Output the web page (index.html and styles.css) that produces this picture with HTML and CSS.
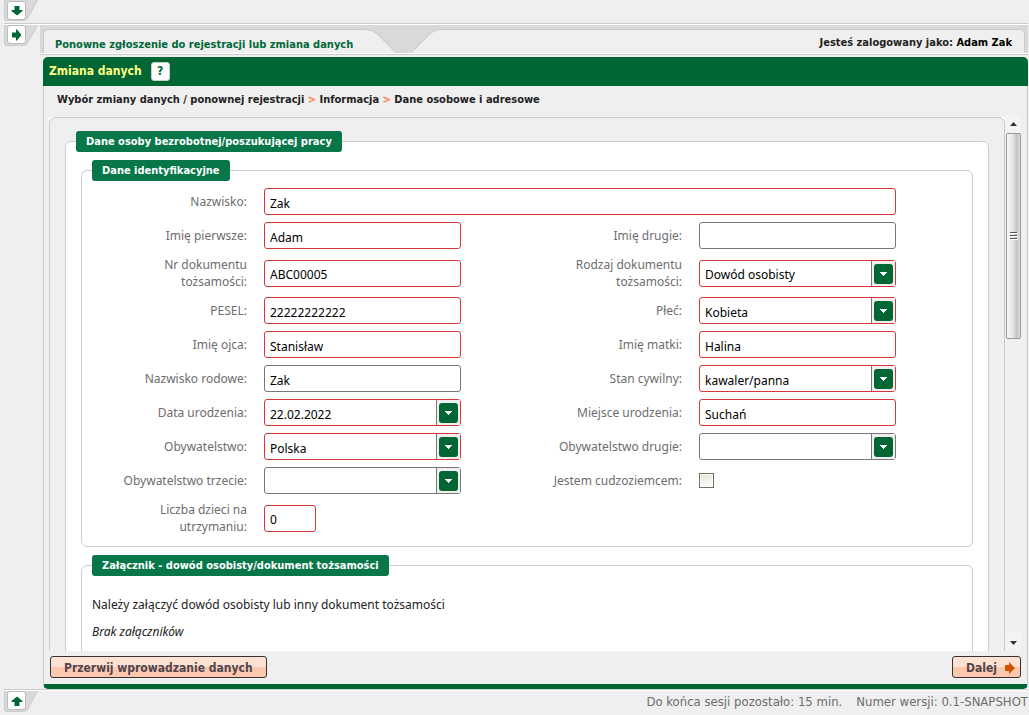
FILE: index.html
```html
<!DOCTYPE html>
<html lang="pl">
<head>
<meta charset="utf-8">
<title>Zmiana danych</title>
<link rel="stylesheet" href="styles.css">
</head>
<body>
<svg class="defs" aria-hidden="true">
  <symbol id="tab" viewBox="0 0 34 21"><path d="M0 0H34L24.500 17.500Q22.500 21 19 21H3Q0 21 0 18Z" fill="#d9d9d9"/><path d="M.5 0V18Q.5 20.500 3 20.500H19Q22 20.500 24 17.500L33.500 0" fill="none" stroke="#cccccc"/></symbol>
  <symbol id="arrow" viewBox="0 0 12 12"><path d="M1 3.500H5V.5H6L10.500 6L6 11.500H5V8.500H1Z" fill="#006837"/></symbol>
  <symbol id="drop" viewBox="0 0 19 20"><rect width="19" height="20" rx="3" fill="#006633"/><path d="M6 8H13V9H12V10H11V11H10V12H9V11H8V10H7V9H6Z" fill="#fff"/></symbol>
</svg>
<header class="topbar">
  <div class="toggle"><svg class="toggle-bg"><use href="#tab"/></svg><button class="toggle-btn" aria-label="Rozwiń nagłówek"><svg class="down"><use href="#arrow"/></svg></button></div>
</header>
<div class="middle">
  <aside class="rail">
    <div class="toggle"><svg class="toggle-bg"><use href="#tab"/></svg><button class="toggle-btn" aria-label="Rozwiń menu"><svg><use href="#arrow"/></svg></button></div>
  </aside>
  <main class="main">
    <div class="strip">
      <a class="tab" href="#zmiana">Ponowne zgłoszenie do rejestracji lub zmiana danych</a>
      <svg class="valley" viewBox="0 0 74 24"><path d="M0 0H74V24H0Z" fill="#efefef"/><path d="M0 .5Q6 .5 11 5L30 24H45L63 6Q68 .5 74 .5V0H0Z" fill="#d9d9d9"/><path d="M0 .5Q6 .5 11 5L30 24M45 24L63 6Q68 .5 74 .5" fill="none" stroke="#cbcbcb"/></svg>
      <div class="user">Jesteś zalogowany jako:&nbsp;<b>Adam Zak</b></div>
    </div>
    <section class="window" id="zmiana">
      <div class="titlebar"><h1>Zmiana danych</h1><button class="help" aria-label="Pomoc">?</button></div>
      <nav class="crumbs">Wybór zmiany danych / ponownej rejestracji <i>&gt;</i> Informacja <i>&gt;</i> Dane osobowe i adresowe</nav>
      <div class="viewport">
        <div class="scroller">
          <form class="sheet" id="form">
            <fieldset class="group outer">
              <legend>Dane osoby bezrobotnej/poszukującej pracy</legend>
              <fieldset class="group">
                <legend>Dane identyfikacyjne</legend>
                <div class="grid">
                  <label for="nazwisko">Nazwisko:</label><input class="box req wide" id="nazwisko" value="Zak">
                  <label for="imie1">Imię pierwsze:</label><input class="box req" id="imie1" value="Adam">
                  <label for="imie2">Imię drugie:</label><input class="box" id="imie2">
                  <label for="nrdok">Nr dokumentu tożsamości:</label><input class="box req" id="nrdok" value="ABC00005">
                  <label for="rodzaj">Rodzaj dokumentu tożsamości:</label><div class="combo"><select class="box req" id="rodzaj"><option>Dowód osobisty</option></select><span class="pick"><svg><use href="#drop"/></svg></span></div>
                  <label for="pesel">PESEL:</label><input class="box req" id="pesel" value="22222222222">
                  <label for="plec">Płeć:</label><div class="combo"><select class="box req" id="plec"><option>Kobieta</option></select><span class="pick"><svg><use href="#drop"/></svg></span></div>
                  <label for="ojciec">Imię ojca:</label><input class="box req" id="ojciec" value="Stanisław">
                  <label for="matka">Imię matki:</label><input class="box req" id="matka" value="Halina">
                  <label for="rodowe">Nazwisko rodowe:</label><input class="box" id="rodowe" value="Zak">
                  <label for="stan">Stan cywilny:</label><div class="combo"><select class="box req" id="stan"><option>kawaler/panna</option></select><span class="pick"><svg><use href="#drop"/></svg></span></div>
                  <label for="data">Data urodzenia:</label><div class="combo"><input class="box req" id="data" value="22.02.2022"><span class="pick"><svg><use href="#drop"/></svg></span></div>
                  <label for="miejsce">Miejsce urodzenia:</label><input class="box req" id="miejsce" value="Suchań">
                  <label for="ob1">Obywatelstwo:</label><div class="combo"><select class="box req" id="ob1"><option>Polska</option></select><span class="pick"><svg><use href="#drop"/></svg></span></div>
                  <label for="ob2">Obywatelstwo drugie:</label><div class="combo"><select class="box" id="ob2"><option></option></select><span class="pick"><svg><use href="#drop"/></svg></span></div>
                  <label for="ob3">Obywatelstwo trzecie:</label><div class="combo"><select class="box" id="ob3"><option></option></select><span class="pick"><svg><use href="#drop"/></svg></span></div>
                  <label for="cudz">Jestem cudzoziemcem:</label><input class="check" type="checkbox" id="cudz">
                  <label for="dzieci">Liczba dzieci na utrzymaniu:</label><input class="box req short" id="dzieci" value="0">
                </div>
              </fieldset>
              <fieldset class="group">
                <legend>Załącznik - dowód osobisty/dokument tożsamości</legend>
                <div class="notes"><p>Należy załączyć dowód osobisty lub inny dokument tożsamości</p><p><em>Brak załączników</em></p></div>
              </fieldset>
            </fieldset>
          </form>
        </div>
        <div class="scrollbar" aria-hidden="true">
          <svg class="sb-arrow" viewBox="0 0 15 18"><path d="M4 11L7.500 7L11 11Z" fill="#333"/></svg>
          <div class="thumb"><svg viewBox="0 0 8 8"><path d="M0 .5H7M0 3.500H7M0 6.500H7" stroke="#555"/><path d="M1 1.500H8M1 4.500H8M1 7.500H8" stroke="#fff"/></svg></div>
          <svg class="sb-arrow last" viewBox="0 0 15 18"><path d="M4 8L7.500 12L11 8Z" fill="#333"/></svg>
        </div>
      </div>
      <div class="actions">
        <button class="btn">Przerwij wprowadzanie danych</button>
        <button class="btn next">Dalej<svg viewBox="0 0 10 12"><path d="M0 3H4V0L10 6L4 12V9H0Z" fill="#d35400"/></svg></button>
      </div>
    </section>
  </main>
</div>
<footer class="status">
  <div class="toggle"><svg class="toggle-bg"><use href="#tab"/></svg><button class="toggle-btn" aria-label="Rozwiń stopkę"><svg class="up"><use href="#arrow"/></svg></button></div>
  <p><span>Do końca sesji pozostało: 15 min.</span><span>Numer wersji: 0.1-SNAPSHOT</span></p>
</footer>
</body>
</html>
```
FILE: styles.css
```css
* { box-sizing: border-box; }
body {
  margin: 0;
  height: 100vh;
  display: flex;
  flex-direction: column;
  background: #efefef;
  color: #222;
  font: 12px/17px Tahoma, "DejaVu Sans Condensed", "DejaVu Sans", sans-serif;
  overflow: hidden;
}
svg { display: block; }
.defs { position: absolute; width: 0; height: 0; }
button, input, select { font: inherit; color: #000; margin: 0; }
button { padding: 0; cursor: pointer; }

.topbar {
  height: 25px;
  margin: 0 1px 0 4px;
  border-bottom: 1px solid #fff;
  box-shadow: inset 0 -1px #ccc;
}
.toggle { display: grid; width: 34px; height: 21px; }
.toggle > * { grid-area: 1 / 1; }
.toggle-bg { width: 34px; height: 21px; }
.toggle-btn {
  display: grid;
  place-items: center;
  width: 19px;
  height: 19px;
  margin-left: 3px;
  border: 1px solid #bbb;
  border-radius: 3px;
  background: #fff;
}
.topbar .toggle-btn { margin-top: 1px; }
.toggle-btn svg { width: 12px; height: 12px; }
.down { transform: rotate(90deg); }
.up { transform: rotate(-90deg); }

.middle { flex: 1; min-height: 0; display: flex; }
.rail { width: 40px; padding-left: 4px; }
.main {
  flex: 1;
  min-width: 0;
  display: flex;
  flex-direction: column;
  margin-right: 1px;
}
.strip {
  display: flex;
  height: 30px;
  padding: 4px 3px 0;
  background: #d9d9d9;
  border-bottom: 1px solid #ccc;
  box-shadow: inset 0 -1px #fff;
  font-weight: bold;
  font-size: 11px;
}
.tab, .user {
  height: 24px;
  background: #efefef;
  border: 0 solid #cbcbcb;
  border-top-width: 1px;
  white-space: nowrap;
}
.tab {
  width: 323px;
  padding: 6px 0 0 11px;
  border-left-width: 1px;
  border-top-left-radius: 5px;
  color: #006837;
  text-decoration: none;
}
.valley { width: 74px; height: 24px; flex: none; }
.user {
  flex: 1;
  padding: 4px 12px 0 0;
  border-right-width: 1px;
  border-top-right-radius: 5px;
  text-align: right;
}
.user b { color: #000; }

.window {
  flex: 1;
  min-height: 0;
  display: flex;
  flex-direction: column;
  margin: 2px 0 0 3px;
  border: 1px solid #ccc;
  border-width: 0 1px;
  border-bottom: 5px solid #063;
  border-radius: 5px;
}
.titlebar {
  display: flex;
  align-items: center;
  gap: 9px;
  height: 29px;
  margin: 0 -1px;
  padding-left: 6px;
  background: #063;
  border-radius: 5px 5px 0 0;
}
.titlebar h1 { margin: 0; font-size: 12px; color: #ff8; }
.help {
  width: 19px;
  height: 19px;
  border: 1px solid #ccc;
  border-radius: 3px;
  background: #fff;
  color: #063;
  font-weight: bold;
  line-height: 17px;
}
.crumbs {
  height: 29px;
  padding: 5px 13px 0;
  font-size: 11px;
  font-weight: bold;
}
.crumbs i { font-style: normal; color: #ff7f3f; }

.viewport { flex: 1; min-height: 0; display: flex; padding: 0 6px 0 5px; }
.scroller {
  flex: 1;
  min-width: 0;
  margin-top: 2px;
  overflow: auto;
  scrollbar-width: none;
  background: #fff;
}
.sheet {
  min-height: 700px;
  padding: 13px 15px;
  background: #efefef;
  border: 1px solid #ccc;
  border-radius: 6px;
}
.group {
  margin: 0;
  padding: 0;
  min-width: 0;
  border: 1px solid #ccc;
  border-radius: 6px;
}
.group + .group { margin-top: 8px; }
.group legend {
  height: 21px;
  margin-left: 10px;
  padding: 0 10px;
  border-radius: 3px;
  background: #07774a;
  color: #fff;
  font-size: 11px;
  font-weight: bold;
  line-height: 21px;
}
.outer { padding: 8px 15px 40px; background: #fff; }
.outer > legend { margin-left: -5px; }
.grid {
  display: grid;
  grid-template-columns: 140px 197px minmax(140px, 1fr) 197px;
  gap: 7px 17px;
  align-items: center;
  padding: 7px 76px 11px 25px;
  font-family: "Noto Sans", sans-serif;
}
.grid label {
  justify-self: end;
  max-width: 140px;
  color: #6d6d6d;
  text-align: right;
}
.box {
  width: 100%;
  height: 27px;
  padding: 3px 5px 0;
  border: 1px solid #777;
  border-radius: 3px;
  background: #fff;
  appearance: none;
  outline: 0;
}
.req { border-color: #d9363a; }
.wide { grid-column: 2 / -1; }
.short { width: 52px; }
.combo { display: grid; }
.combo > * { grid-area: 1 / 1; }
.pick {
  justify-self: end;
  width: 24px;
  margin: 1px;
  padding: 3px 0 0 2px;
  border-left: 1px solid #777;
  background: #efefef;
  pointer-events: none;
}
.pick svg { width: 19px; height: 20px; }
.check {
  appearance: none;
  width: 15px;
  height: 15px;
  border: 1px solid #6f6f68;
  background: linear-gradient(160deg, #dfe5d3, #fff);
  box-shadow: inset 0 0 0 1px #fff;
}
.notes { min-height: 110px; padding: 20px 10px; font-family: "Noto Sans", sans-serif; }
.notes p { margin: 0 0 10px; }

.scrollbar {
  display: flex;
  flex-direction: column;
  width: 16px;
  padding-left: 1px;
  background: #f0f0f0;
}
.sb-arrow { width: 15px; height: 18px; flex: none; background: #f4f4f4; }
.last { margin-top: auto; }
.thumb {
  display: grid;
  place-items: center;
  height: 40%;
  max-height: 206px;
  border: 1px solid #999;
  border-radius: 2px;
  background: linear-gradient(90deg, #f7f7f7, #e6e6e8 45%, #c4c4c8 75%, #dcdcdc);
}
.thumb svg { width: 8px; height: 8px; }

.actions {
  display: flex;
  justify-content: space-between;
  padding: 5px 6px 6px;
}
.btn {
  display: flex;
  align-items: center;
  gap: 8px;
  height: 22px;
  padding: 2px 13px 0;
  border: 1px solid #333;
  border-radius: 3px;
  background: linear-gradient(#ffe1d3 50%, #fdc8ad 50%);
  color: #4d4650;
  font-weight: bold;
}
.next { padding-right: 5px; }
.next svg { width: 10px; height: 12px; }

.status {
  display: flex;
  justify-content: space-between;
  height: 26px;
  margin: 0 1px 0 4px;
  border-top: 1px solid #ccc;
  box-shadow: inset 0 1px #fff;
  color: #6d6d6d;
  font-size: 13px;
}
.status .toggle { padding-top: 1px; }
.status p { display: flex; gap: 14px; margin: 0; padding-top: 3px; white-space: nowrap; }
```
